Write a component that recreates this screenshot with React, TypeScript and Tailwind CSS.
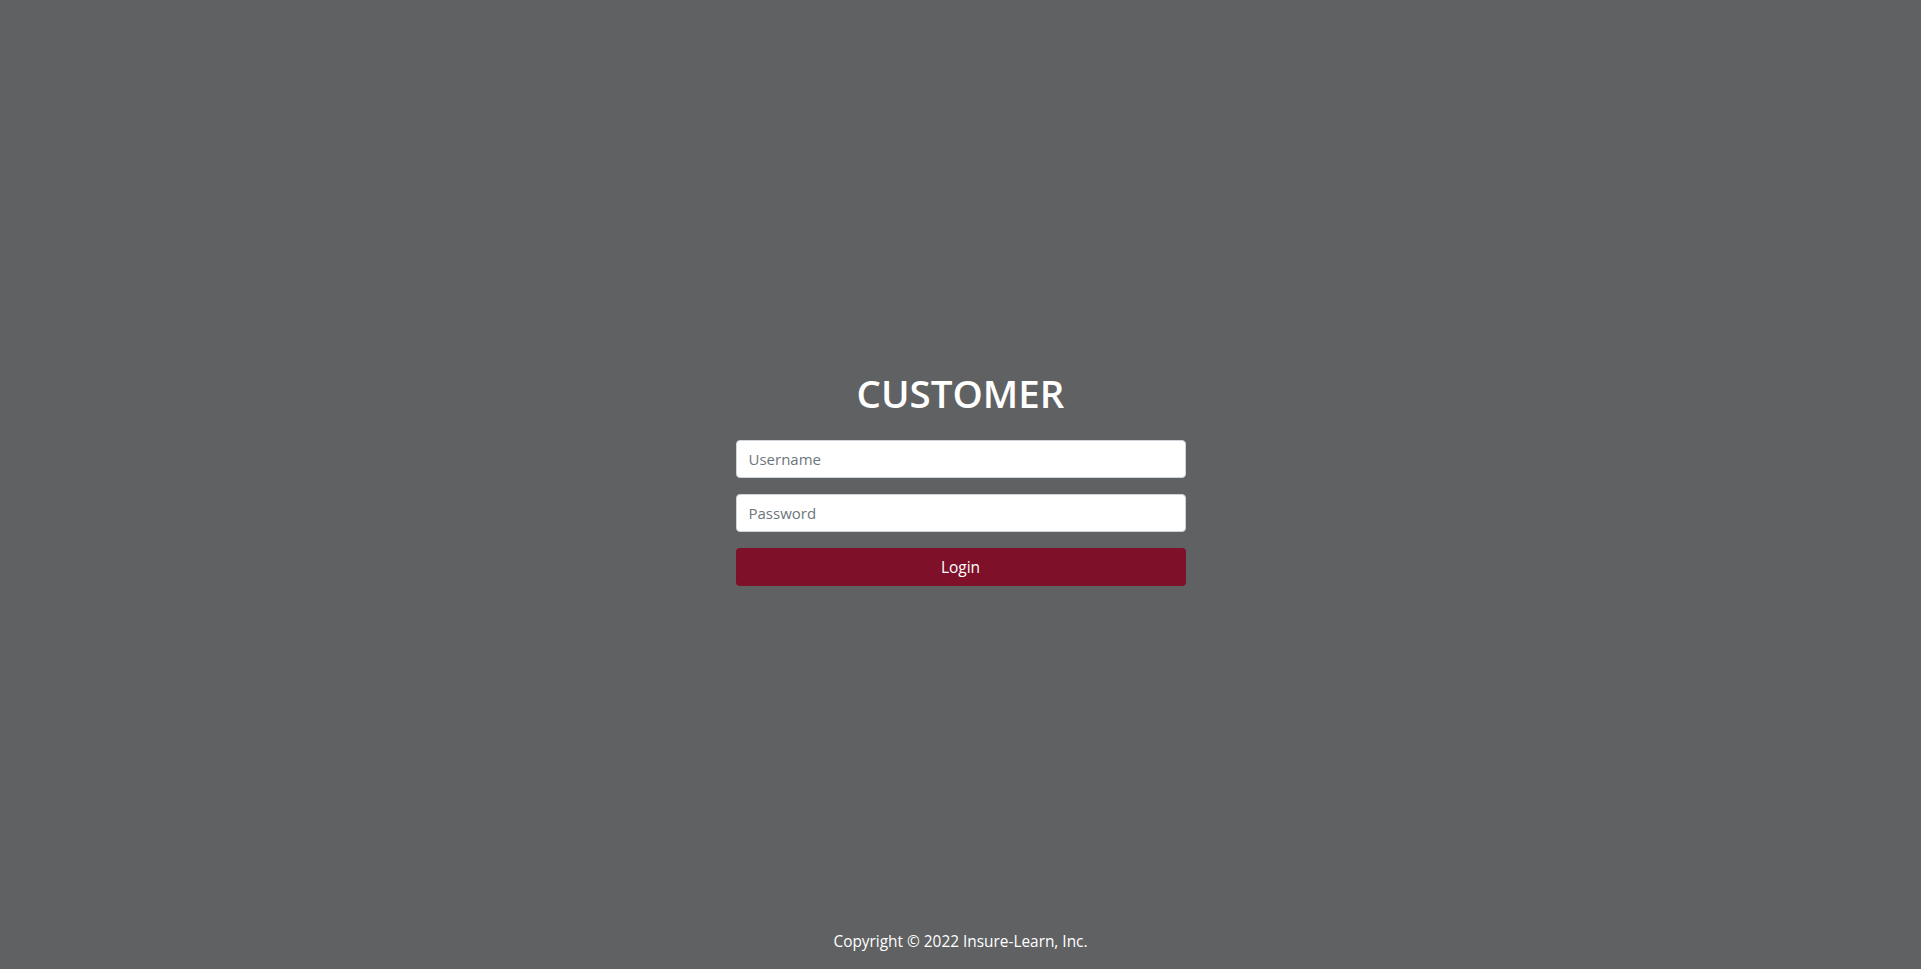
import React from "react";

export default function App() {
  return (
    <div
      className="flex h-screen w-full flex-col items-center bg-[#606163]"
      style={{ fontFamily: '"Open Sans", "Noto Sans", sans-serif' }}
    >
      <form
        className="mt-[369px] flex w-[450px] flex-col"
        onSubmit={(e) => e.preventDefault()}
      >
        <h1 className="mb-[23px] text-center text-[38.5px] font-semibold leading-[48px] text-white">
          CUSTOMER
        </h1>
        <input
          type="text"
          placeholder="Username"
          className="mb-4 h-[38px] w-full rounded-[4px] border border-[#ced4da] bg-white px-3 text-[15px] text-[#495057] outline-none placeholder:text-[#6c757d]"
        />
        <input
          type="password"
          placeholder="Password"
          className="mb-4 h-[38px] w-full rounded-[4px] border border-[#ced4da] bg-white px-3 text-[15px] text-[#495057] outline-none placeholder:text-[#6c757d]"
        />
        <button
          type="submit"
          className="h-[38px] w-full rounded-[4px] bg-[#7e1129] pt-[2px] text-[15.5px] text-white"
        >
          Login
        </button>
      </form>
      <footer className="mt-auto pb-[15px] text-[15.4px] leading-[24px] text-white">
        Copyright © 2022 Insure-Learn, Inc.
      </footer>
    </div>
  );
}
